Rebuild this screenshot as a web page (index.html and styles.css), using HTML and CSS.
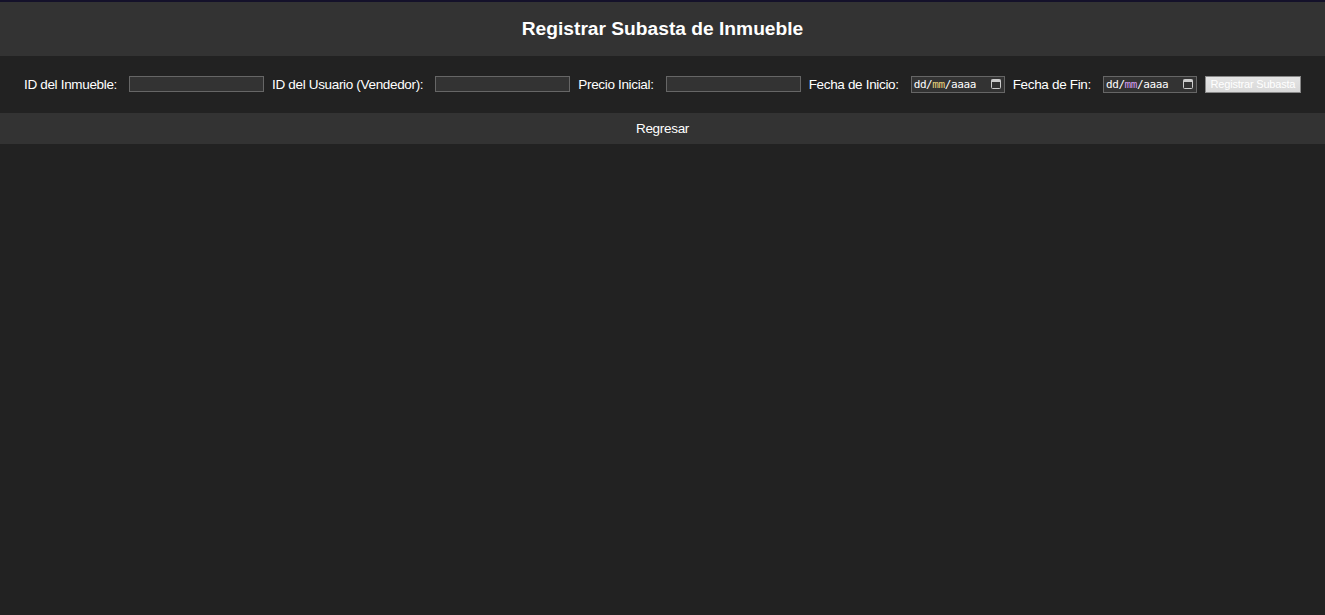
FILE: index.html
```html
<!DOCTYPE html>
<html lang="es">
<head>
<meta charset="utf-8">
<title>Registrar Subasta de Inmueble</title>
<link rel="stylesheet" href="styles.css">
</head>
<body>
<div class="topline"></div>
<header class="header">
  <h1 class="title">Registrar Subasta de Inmueble</h1>
</header>
<form class="form">
  <label class="label">ID del Inmueble:</label>
  <input class="field" type="text">
  <label class="label">ID del Usuario (Vendedor):</label>
  <input class="field" type="text">
  <label class="label">Precio Inicial:</label>
  <input class="field" type="text">
  <label class="label">Fecha de Inicio:</label>
  <div class="date"><span class="date-text">dd/<span class="mm1">mm</span>/aaaa</span><svg class="cal" width="10" height="10" viewBox="0 0 10 10"><rect x="0.5" y="0.5" width="9" height="9" rx="1" fill="none" stroke="#ccc"/><rect x="0.5" y="0.5" width="9" height="2.5" fill="#ccc"/></svg></div>
  <label class="label">Fecha de Fin:</label>
  <div class="date"><span class="date-text">dd/<span class="mm2">mm</span>/aaaa</span><svg class="cal" width="10" height="10" viewBox="0 0 10 10"><rect x="0.5" y="0.5" width="9" height="9" rx="1" fill="none" stroke="#ccc"/><rect x="0.5" y="0.5" width="9" height="2.5" fill="#ccc"/></svg></div>
  <button class="submit" type="button">Registrar Subasta</button>
</form>
<nav class="back">Regresar</nav>
</body>
</html>
```
FILE: styles.css
```css
html, body {
  margin: 0;
  padding: 0;
  background: #222222;
  font-family: "Liberation Sans", Arial, sans-serif;
  color: #ffffff;
}
.topline {
  height: 2px;
  background: #14112a;
}
.header {
  background: #333333;
  height: 54px;
  display: flex;
  align-items: center;
  justify-content: center;
}
.title {
  margin: 0;
  font-size: 19.2px;
  font-weight: bold;
  color: #ffffff;
}
.form {
  height: 57px;
  display: flex;
  align-items: center;
  padding: 0 0 1px 24px;
  box-sizing: border-box;
}
.label {
  font-size: 13.5px;
  letter-spacing: -0.33px;
  color: #ffffff;
  margin-right: 12px;
  white-space: nowrap;
  flex-shrink: 0;
}
.field {
  flex-shrink: 0;
  width: 135px;
  height: 16px;
  box-sizing: border-box;
  background: #333333;
  border: 1px solid #666666;
  margin: 0 8px 0 0;
  padding: 0;
  color: #fff;
}
.date {
  flex-shrink: 0;
  width: 94px;
  height: 17px;
  box-sizing: border-box;
  background: #333333;
  border: 1px solid #666666;
  display: flex;
  align-items: center;
  justify-content: space-between;
  padding: 0 3px 0 2px;
  margin-right: 8px;
}
.date-text {
  font-family: "DejaVu Sans Mono", monospace;
  font-size: 11px;
  color: #ffffff;
  letter-spacing: -0.4px;
}
.mm1 { color: #e8d27a; }
.mm2 { color: #d49cf0; }
.cal { display: block; }
.submit {
  flex-shrink: 0;
  width: 96px;
  height: 17px;
  box-sizing: border-box;
  border: 1px solid #888888;
  background: linear-gradient(#e4e4e4, #d8d8d8);
  color: #ffffff;
  font-family: "Liberation Sans", Arial, sans-serif;
  font-size: 11px;
  letter-spacing: -0.2px;
  padding: 0;
  margin: 0;
  white-space: nowrap;
  overflow: hidden;
}
.back {
  background: #333333;
  height: 31px;
  display: flex;
  align-items: center;
  justify-content: center;
  font-size: 13.5px;
  letter-spacing: -0.3px;
  color: #ffffff;
}
```
